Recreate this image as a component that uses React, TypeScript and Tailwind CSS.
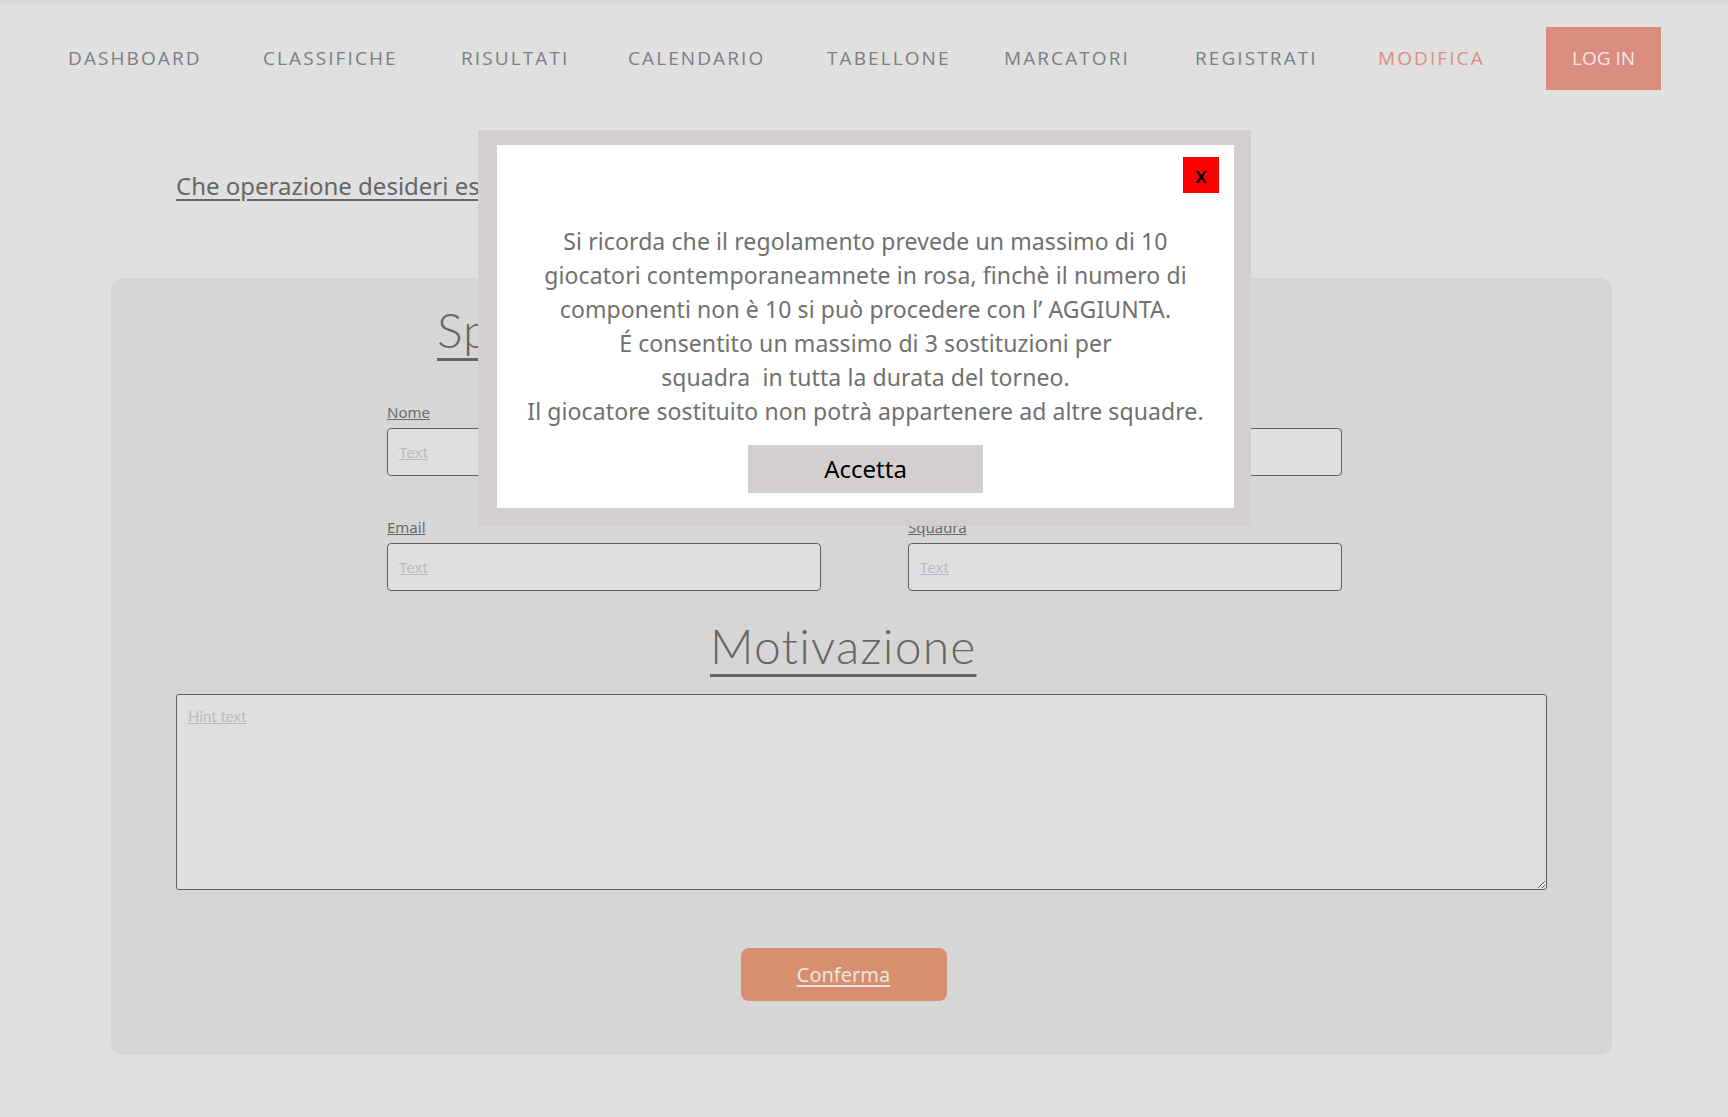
import { useState } from 'react';

const navItems = [
  { label: 'DASHBOARD', width: 'w-[195px]' },
  { label: 'CLASSIFICHE', width: 'w-[198px]' },
  { label: 'RISULTATI', width: 'w-[167px]' },
  { label: 'CALENDARIO', width: 'w-[199px]' },
  { label: 'TABELLONE', width: 'w-[177px]' },
  { label: 'MARCATORI', width: 'w-[191px]' },
  { label: 'REGISTRATI', width: 'w-[183px]' },
  { label: 'MODIFICA', width: 'w-[168px]', active: true },
];

const ruleLines = [
  'Si ricorda che il regolamento prevede un massimo di 10',
  'giocatori contemporaneamnete in rosa, finchè il numero di',
  'componenti non è 10 si può procedere con l’ AGGIUNTA.',
  'É consentito un massimo di 3 sostituzioni per',
  'squadra\u00a0 in tutta la durata del torneo.',
  'Il giocatore sostituito non potrà appartenere ad altre squadre.',
];

const plex = 'font-["Noto_Sans","Open_Sans",sans-serif]';

function Field({ label }: { label: string }) {
  return (
    <div className="flex flex-col">
      <label className={`${plex} text-[15px] leading-[20px] text-[#6b6b6b] underline mb-[6px]`}>{label}</label>
      <input
        placeholder="Text"
        className={`${plex} h-[48px] w-full rounded-[4px] border border-[#606060] bg-[#dedfe0] px-[11px] text-[15px] placeholder:text-[#babbbf] placeholder:underline outline-none`}
      />
    </div>
  );
}

export default function App() {
  const [open, setOpen] = useState(true);

  return (
    <div className="relative min-h-[1117px] bg-[#e0e0e0] shadow-[inset_0_7px_6px_-5px_rgba(0,0,0,0.06)]">
      {/* Top navigation */}
      <nav className="flex items-center pl-[68px] pt-[27px]">
        {navItems.map((item) => (
          <a
            key={item.label}
            className={`${item.width} shrink-0 -mt-[2px] font-["Open_Sans",sans-serif] text-[19px] font-medium tracking-[0.11em] leading-[26px] ${
              item.active ? 'text-[#da8d7f]' : 'text-[#7b7e83]'
            }`}
          >
            {item.label}
          </a>
        ))}
        <button className='h-[63px] w-[115px] bg-[#da8c7e] font-["Open_Sans",sans-serif] text-[19px] text-[#f6e8e4]'>
          LOG IN
        </button>
      </nav>

      {/* Question */}
      <p className={`${plex} ml-[176px] mt-[80px] text-[24px] leading-[32px] text-[#666666] underline underline-offset-[4px]`}>
        Che operazione desideri eseguire?
      </p>

      {/* Form card */}
      <section className="mx-[111px] mt-[76px] w-[1501px] rounded-[12px] bg-[#d6d6d6] pb-[54px] pt-[22px]">
        <h2 className='ml-[326px] font-["Lato",sans-serif] text-[48px] font-light leading-[60px] tracking-[1px] text-[#666666] underline decoration-[3px] underline-offset-[10px]'>
          Specifica giocatore
        </h2>

        <div className="ml-[276px] mt-[42px] grid w-[955px] grid-cols-2 gap-x-[87px] gap-y-[41px]">
          <Field label="Nome" />
          <Field label="Cognome" />
          <Field label="Email" />
          <Field label="Squadra" />
        </div>

        <h3 className='mt-[25px] ml-[599px] w-fit font-["Lato",sans-serif] text-[48px] font-light leading-[60px] tracking-[1.2px] text-[#666666] underline decoration-[3px] underline-offset-[10px]'>
          Motivazione
        </h3>

        <div className="mx-[65px] mt-[18px]">
          <textarea
            placeholder="Hint text"
            className='block h-[196px] w-full rounded-[3px] border border-[#606060] bg-[#dedfe0] px-[11px] py-[10px] font-["Lato",sans-serif] text-[15px] placeholder:text-[#babbbf] placeholder:underline outline-none'
          />
        </div>

        <div className="mt-[58px] flex justify-center pr-[36px]">
          <button className={`${plex} h-[53px] w-[206px] rounded-[8px] bg-[#d78f6f] text-[20px] text-[#efe6df] underline underline-offset-[3px]`}>
            Conferma
          </button>
        </div>
      </section>

      {/* Rules dialog */}
      {open && (
        <div className="absolute left-[478px] top-[130px] w-[773px] bg-[#d3cfcf] pb-[18px] pl-[19px] pr-[17px] pt-[15px]">
          <div className="relative flex flex-col items-center bg-white pb-[15px] pt-[79px]">
            <button
              onClick={() => setOpen(false)}
              className='absolute right-[15px] top-[12px] flex h-[36px] w-[36px] items-center justify-center bg-[#ff0000] font-["Open_Sans",sans-serif] text-[21px] font-semibold leading-none text-black'
            >
              x
            </button>
            <div className={`${plex} text-center text-[23px] leading-[34px] tracking-[0.1px] text-[#707070]`}>
              {ruleLines.map((line) => (
                <div key={line} className="whitespace-pre">
                  {line}
                </div>
              ))}
            </div>
            <button className={`${plex} mt-[17px] h-[48px] w-[235px] bg-[#d3cfcf] text-[24px] text-black`}>
              Accetta
            </button>
          </div>
        </div>
      )}
    </div>
  );
}
